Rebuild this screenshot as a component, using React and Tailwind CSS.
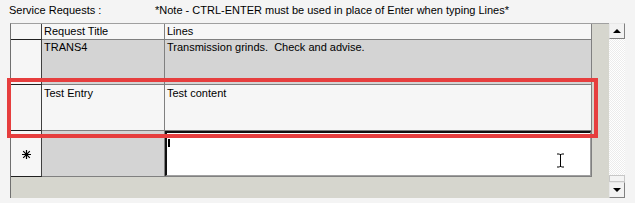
import React from "react";

function Selector({ children, className = "" }) {
  return (
    <div className={`w-[31px] shrink-0 bg-[#f6f6f6] border-r border-r-[#404040] border-b border-b-[#202020] flex items-center justify-center ${className}`}>
      {children}
    </div>
  );
}

function Cell({ children, w, bg, className = "" }) {
  return (
    <div className={`${w} ${bg} shrink-0 border-r border-r-[#808080] border-b border-b-[#808080] px-[2px] pt-[1px] leading-[13px] ${className}`}>
      {children}
    </div>
  );
}

export default function App() {
  return (
    <div className="w-[635px] h-[203px] bg-[#f4f4f4] relative overflow-hidden text-[11px] text-black" style={{ fontFamily: "'Liberation Sans', Arial, sans-serif" }}>
      {/* caption line */}
      <div className="h-[23px] flex items-start pt-[4px] leading-[13px]">
        <span className="ml-[9px] w-[146px]">Service Requests :</span>
        <span>*Note - CTRL-ENTER must be used in place of Enter when typing Lines*</span>
      </div>

      {/* datasheet */}
      <div className="flex ml-[10px] h-[175px]">
        <div className="w-[599px] bg-[#d6d6ce] border-l border-l-[#707070] border-t border-t-[#a0a0a0]">
          <div className="w-[581px]">
            {/* header */}
            <div className="flex h-[16px]">
              <Selector className="border-b-[#202020]" />
              <Cell w="w-[123px]" bg="bg-[#f7f7f7]" className="border-r-[#404040] border-b-[#404040]">Request Title</Cell>
              <Cell w="w-[427px]" bg="bg-[#f7f7f7]" className="border-r-[#404040] border-b-[#404040]">Lines</Cell>
            </div>
            {/* row 1 */}
            <div className="flex h-[45px]">
              <Selector />
              <Cell w="w-[123px]" bg="bg-[#d4d4d4]">TRANS4</Cell>
              <Cell w="w-[427px]" bg="bg-[#d4d4d4]">Transmission grinds.&nbsp; Check and advise.</Cell>
            </div>
            {/* row 2 */}
            <div className="flex h-[46px]">
              <Selector />
              <Cell w="w-[123px]" bg="bg-[#f6f6f6]" className="pt-[2px]">Test Entry</Cell>
              <Cell w="w-[427px]" bg="bg-[#f6f6f6]" className="pt-[2px]">Test content</Cell>
            </div>
            {/* new record row */}
            <div className="flex h-[46px]">
              <Selector>
                <svg width="9" height="9" viewBox="0 0 9 9" className="mt-[1px]">
                  <path d="M4.5 0v9M0 4.5h9M1.2 1.2l6.6 6.6M7.8 1.2l-6.6 6.6" stroke="#000" strokeWidth="1.2" fill="none" />
                </svg>
              </Selector>
              <Cell w="w-[123px]" bg="bg-[#d4d4d4]" />
              <div className="w-[427px] shrink-0 bg-[#d4d4d4] border-b border-b-[#808080] border-r border-r-[#808080]">
                <div className="h-full bg-white border-t-2 border-l-2 border-t-[#101010] border-l-[#101010] border-b border-r border-b-[#a0a0a0] border-r-[#a0a0a0] relative">
                  <div className="w-[2px] h-[8px] bg-black ml-[1px] mt-[6px]" />
                  <svg className="absolute left-[389px] top-[20px]" width="9" height="15" viewBox="0 0 9 15">
                    <path d="M1 1h2.5M5.5 1H8M4.5 1.5v12M1 14h2.5M5.5 14H8M3.5 1.5h2M3.5 13.5h2" stroke="#000" strokeWidth="1" fill="none" />
                  </svg>
                </div>
              </div>
            </div>
          </div>
        </div>

        {/* vertical scrollbar */}
        <div className="w-[16px] flex flex-col">
          <div className="h-[16px] bg-[#f2f2f2] border-t border-l border-t-[#e8e8e8] border-l-[#e8e8e8] border-r border-b border-r-[#808080] border-b-[#808080] flex items-center justify-center">
            <div className="w-0 h-0 border-l-[4px] border-r-[4px] border-b-[4px] border-l-transparent border-r-transparent border-b-black" />
          </div>
          <div className="flex-1 bg-[#fafafa]" style={{ backgroundImage: "repeating-conic-gradient(#ffffff 0% 25%, #ececec 0% 50%)", backgroundSize: "2px 2px" }} />
          <div className="h-[7px] bg-[#f4f4f4] border border-[#c8c8c8]" />
          <div className="h-[16px] bg-[#f2f2f2] border-t border-l border-t-[#e8e8e8] border-l-[#e8e8e8] border-r border-b border-r-[#808080] border-b-[#808080] flex items-center justify-center">
            <div className="w-0 h-0 border-l-[4px] border-r-[4px] border-t-[4px] border-l-transparent border-r-transparent border-t-black" />
          </div>
        </div>
      </div>

      {/* red highlight annotation */}
      <div className="absolute left-[7px] top-[78px] w-[591px] h-[60px] border-[4px] border-[#e63e3e] pointer-events-none" />
    </div>
  );
}
